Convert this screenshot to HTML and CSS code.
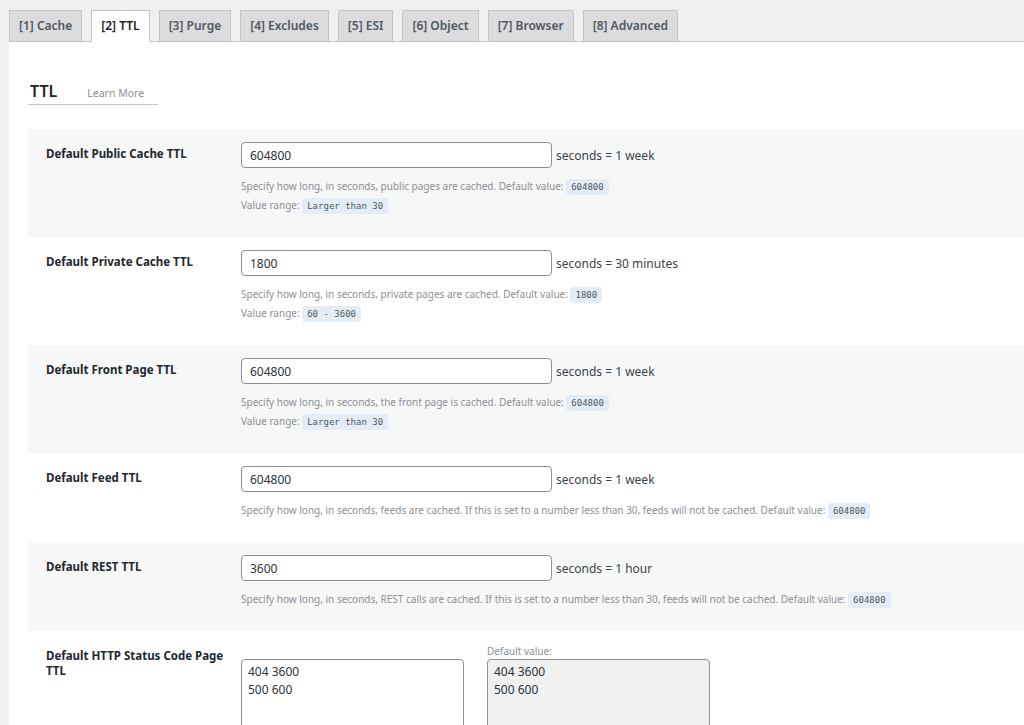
FILE: index.html
```html
<!DOCTYPE html>
<html lang="en">
<head>
    <meta charset="UTF-8">
    <title>LiteSpeed Cache - TTL</title>
    <link rel="stylesheet" href="styles.css">
</head>
<body>
    <div class="wrap">
        <nav class="nav-tabs">
            <a class="nav-tab">[1] Cache</a>
            <a class="nav-tab active">[2] TTL</a>
            <a class="nav-tab">[3] Purge</a>
            <a class="nav-tab">[4] Excludes</a>
            <a class="nav-tab">[5] ESI</a>
            <a class="nav-tab">[6] Object</a>
            <a class="nav-tab">[7] Browser</a>
            <a class="nav-tab">[8] Advanced</a>
        </nav>

        <div class="panel">
            <h3 class="section-title">TTL <a class="learn-more">Learn More</a></h3>

            <div class="form-table">
                <div class="form-row">
                    <div class="row-label">Default Public Cache TTL</div>
                    <div class="row-field">
                        <div class="field-line">
                            <input type="text" class="text-input" value="604800">
                            <span class="unit">seconds = 1 week</span>
                        </div>
                        <div class="desc">
                            Specify how long, in seconds, public pages are cached. Default value: <code>604800</code><br>
                            Value range: <code>Larger than 30</code>
                        </div>
                    </div>
                </div>

                <div class="form-row">
                    <div class="row-label">Default Private Cache TTL</div>
                    <div class="row-field">
                        <div class="field-line">
                            <input type="text" class="text-input" value="1800">
                            <span class="unit">seconds = 30 minutes</span>
                        </div>
                        <div class="desc">
                            Specify how long, in seconds, private pages are cached. Default value: <code>1800</code><br>
                            Value range: <code>60 - 3600</code>
                        </div>
                    </div>
                </div>

                <div class="form-row">
                    <div class="row-label">Default Front Page TTL</div>
                    <div class="row-field">
                        <div class="field-line">
                            <input type="text" class="text-input" value="604800">
                            <span class="unit">seconds = 1 week</span>
                        </div>
                        <div class="desc">
                            Specify how long, in seconds, the front page is cached. Default value: <code>604800</code><br>
                            Value range: <code>Larger than 30</code>
                        </div>
                    </div>
                </div>

                <div class="form-row">
                    <div class="row-label">Default Feed TTL</div>
                    <div class="row-field">
                        <div class="field-line">
                            <input type="text" class="text-input" value="604800">
                            <span class="unit">seconds = 1 week</span>
                        </div>
                        <div class="desc">
                            Specify how long, in seconds, feeds are cached. If this is set to a number less than 30, feeds will not be cached. Default value: <code>604800</code>
                        </div>
                    </div>
                </div>

                <div class="form-row">
                    <div class="row-label">Default REST TTL</div>
                    <div class="row-field">
                        <div class="field-line">
                            <input type="text" class="text-input" value="3600">
                            <span class="unit">seconds = 1 hour</span>
                        </div>
                        <div class="desc">
                            Specify how long, in seconds, REST calls are cached. If this is set to a number less than 30, feeds will not be cached. Default value: <code>604800</code>
                        </div>
                    </div>
                </div>

                <div class="form-row">
                    <div class="row-label">Default HTTP Status Code Page TTL</div>
                    <div class="row-field">
                        <div class="textarea-pair">
                            <div class="textarea-col">
                                <div class="small-label"></div>
                                <textarea class="code-area">404 3600
500 600</textarea>
                            </div>
                            <div class="textarea-col">
                                <div class="small-label">Default value:</div>
                                <textarea class="code-area readonly" readonly>404 3600
500 600</textarea>
                            </div>
                        </div>
                    </div>
                </div>
            </div>
        </div>
    </div>
</body>
</html>
```

FILE: styles.css
```css
:root {
    --page-bg: #f0f0f1;
    --row-bg: #f6f7f7;
    --border: #c3c4c7;
    --text: #1d2327;
    --muted: #8c8f94;
    --code-bg: #e4edf6;
}

* {
    margin: 0;
    padding: 0;
    box-sizing: border-box;
}

body {
    background: var(--page-bg);
    color: var(--text);
    font-family: 'Noto Sans', 'Open Sans', sans-serif;
    font-size: 12px;
    overflow: hidden;
}

.wrap {
    padding-left: 9px;
}

.nav-tabs {
    display: flex;
    gap: 9px;
    padding-top: 10px;
    border-bottom: 1px solid var(--border);
}

.nav-tab {
    display: block;
    height: 32px;
    line-height: 30px;
    padding: 0 9px;
    margin-bottom: -1px;
    background: #dcdcde;
    border: 1px solid var(--border);
    color: #50575e;
    font-size: 12px;
    font-weight: 600;
    white-space: nowrap;
}

.nav-tab.active {
    background: #fff;
    color: #1d2327;
    border-bottom-color: #fff;
}

.panel {
    background: #fff;
    padding: 38px 0 200px 19px;
}

.section-title {
    display: inline-flex;
    align-items: baseline;
    gap: 30px;
    width: 130px;
    padding: 0 0 2px 2px;
    border-bottom: 1px solid var(--border);
    font-size: 16px;
    font-weight: 600;
    color: #1d2327;
}

.learn-more {
    font-size: 10.5px;
    font-weight: 400;
    color: var(--muted);
}

.form-table {
    margin-top: 24px;
}

.form-row {
    display: flex;
    padding: 13px 0 22px;
}

.form-row:nth-child(odd) {
    background: var(--row-bg);
}

.row-label {
    width: 213px;
    flex-shrink: 0;
    padding: 4px 8px 0 18px;
    font-weight: 700;
    font-size: 11.5px;
    line-height: 15px;
    color: #23282d;
}

.field-line {
    display: flex;
    align-items: center;
    gap: 4px;
}

.text-input {
    width: 311px;
    height: 26px;
    padding: 0 8px;
    border: 1px solid var(--muted);
    border-radius: 4px;
    font-family: inherit;
    font-size: 12px;
    color: #2c3338;
    background: #fff;
}

.unit {
    font-size: 12px;
    color: #3c434a;
}

.desc {
    margin-top: 9px;
    font-size: 10px;
    line-height: 19px;
    color: var(--muted);
}

code {
    font-family: 'DejaVu Sans Mono', monospace;
    font-size: 9px;
    line-height: 1;
    color: #50575e;
    background: var(--code-bg);
    padding: 3px 5px;
    border-radius: 3px;
}

.textarea-pair {
    display: flex;
    gap: 23px;
}

.small-label {
    height: 15px;
    font-size: 10px;
    color: var(--muted);
}

.code-area {
    display: block;
    width: 223px;
    height: 120px;
    padding: 3px 6px;
    border: 1px solid var(--muted);
    border-radius: 4px;
    font-family: inherit;
    font-size: 12px;
    line-height: 18px;
    color: #2c3338;
    resize: none;
}

.code-area.readonly {
    background: #f0f0f1;
}
```
